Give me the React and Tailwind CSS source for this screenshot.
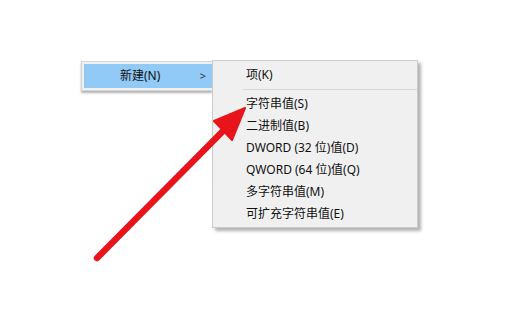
const FONT = "font-['Segoe_UI','Noto_Sans','Noto_Sans_CJK_SC',sans-serif]";

const items = [
  "字符串值(S)",
  "二进制值(B)",
  "DWORD (32 位)值(D)",
  "QWORD (64 位)值(Q)",
  "多字符串值(M)",
  "可扩充字符串值(E)",
];

function Arrow() {
  return (
    <svg className="absolute inset-0 pointer-events-none" width="520" height="325">
      <line x1="97" y1="258" x2="226" y2="128" stroke="#e8141c" strokeWidth="6.5" strokeLinecap="round" />
      <polygon points="245,108 214,121 232,140" fill="#e8141c" stroke="#e8141c" strokeWidth="2" strokeLinejoin="round" />
    </svg>
  );
}

export default function App() {
  return (
    <div className={`relative w-[520px] h-[325px] bg-white text-[12px] text-[#111] ${FONT}`}>
      <div className="flex items-start pl-[81px] pt-[60px]">
        {/* parent menu */}
        <div className="mt-[1px] w-[131px] p-[2px] pr-0 bg-[#f0f0f0] border border-r-0 border-[#d6d6d6] shadow-[0_2px_2px_rgba(0,0,0,0.3)]">
          <div className="flex items-center h-[24px] bg-[#91c9f7] pl-[36px] pr-[6px]">
            <span className="flex-1">新建(N)</span>
            <span className="text-[11px] text-[#333]">&gt;</span>
          </div>
        </div>

        {/* submenu */}
        <div className="w-[206px] pt-[3px] pb-[2px] bg-[#f0f0f0] border border-[#cccccc] shadow-[3px_3px_3px_rgba(0,0,0,0.3)]">
          <div className="flex items-center h-[22px] pl-[33px]">项(K)</div>
          <div className="ml-[30px] my-[3px] h-px bg-[#d7d7d7]" />
          {items.map((t) => (
            <div key={t} className="flex items-center h-[22px] pl-[33px]">
              {t}
            </div>
          ))}
        </div>
      </div>
      <Arrow />
    </div>
  );
}
